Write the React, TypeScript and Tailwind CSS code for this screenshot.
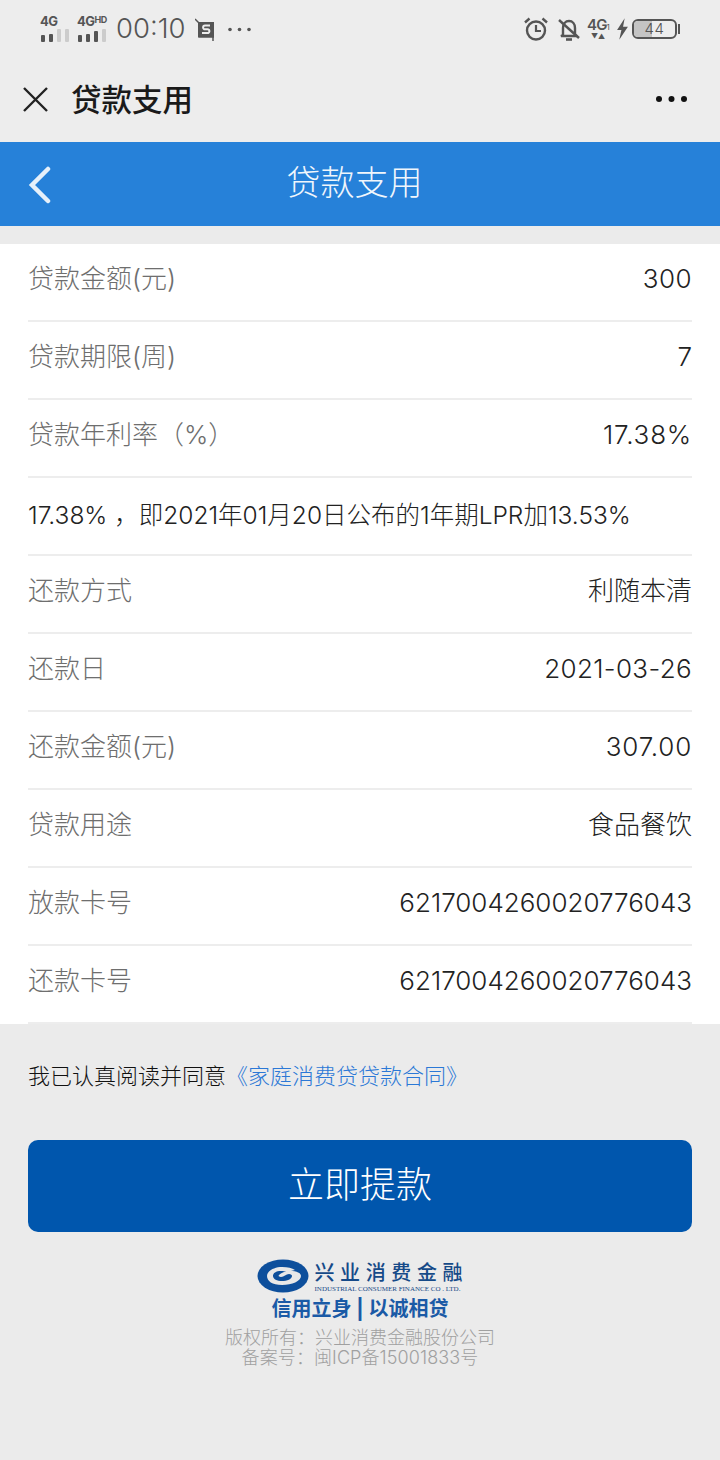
import React from "react";

const FONT = "font-['Inter','Noto_Sans_CJK_SC',sans-serif]";

const rows = [
  { label: "贷款金额(元)", value: "300", spacing: "tracking-[0.5px]" },
  { label: "贷款期限(周)", value: "7", spacing: "" },
  { label: "贷款年利率（%）", value: "17.38%", spacing: "tracking-[0.8px]" },
  { note: "17.38% ，即2021年01月20日公布的1年期LPR加13.53%" },
  { label: "还款方式", value: "利随本清", spacing: "" },
  { label: "还款日", value: "2021-03-26", spacing: "tracking-[0.35px]" },
  { label: "还款金额(元)", value: "307.00", spacing: "tracking-[0.8px]" },
  { label: "贷款用途", value: "食品餐饮", spacing: "" },
  { label: "放款卡号", value: "6217004260020776043", spacing: "" },
  { label: "还款卡号", value: "6217004260020776043", spacing: "" },
];

const SignalBars = ({ heights, level }: { heights: number[]; level: number }) => (
  <div className="mt-[1px] ml-[1px] flex h-[14px] items-end gap-[4px]">
    {heights.map((h, i) => (
      <span key={i} className={i < level ? "w-[4px] rounded-[1px] bg-[#555]" : "w-[4px] rounded-[1px] bg-[#ccc]"} style={{ height: h }} />
    ))}
  </div>
);

const StatusBar = () => (
  <div className="flex h-[58px] items-center justify-between pr-[40px] pl-[40px] text-[#555]">
    <div className="flex items-center">
      <div className="flex w-[37px] flex-col">
        <span className="h-[11px] text-[13px] leading-[11px] font-bold tracking-[-0.5px] text-[#555]">4G</span>
        <SignalBars heights={[7, 8, 13, 13]} level={2} />
      </div>
      <div className="flex w-[39px] flex-col">
        <span className="flex h-[11px] text-[13px] leading-[11px] font-bold tracking-[-0.5px] text-[#555]">
          4G<span className="text-[9px] leading-[8px]">HD</span>
        </span>
        <SignalBars heights={[7, 8, 11, 13]} level={3} />
      </div>
      <span className="text-[27.500px] leading-none font-light text-[#555]">00:10</span>
      <svg className="ml-[9px]" width="22" height="23" viewBox="0 0 22 23">
        <path d="M0 1l4 4M4 5v14h15M18 23v-4" stroke="#555" strokeWidth="1.500" fill="none" />
        <rect x="3" y="4" width="16" height="15" fill="#555" />
        <path d="M15 7.500h-5a1.800 1.800 0 0 0 0 3.800h2.500a1.800 1.800 0 0 1 0 3.800H7" stroke="#ededed" strokeWidth="2" fill="none" />
      </svg>
      <svg className="ml-[11px]" width="23" height="5" viewBox="0 0 23 5">
        <circle cx="2" cy="2.500" r="1.800" fill="#555" />
        <circle cx="11.500" cy="2.500" r="1.800" fill="#555" />
        <circle cx="21" cy="2.500" r="1.800" fill="#555" />
      </svg>
    </div>
    <div className="flex items-center">
      <svg width="24" height="24" viewBox="0 0 24 24" fill="none" stroke="#555">
        <circle cx="12" cy="13.500" r="9" strokeWidth="2.400" />
        <path d="M12 8v6h5" strokeWidth="2.200" />
        <path d="M1 5.500l4.500-4M23 5.500l-4.500-4" strokeWidth="2.400" />
      </svg>
      <svg className="ml-[9px]" width="24" height="24" viewBox="0 0 24 24" fill="none" stroke="#555">
        <path d="M6 18v-7c0-4 2.500-7 6-7s6 3 6 7v7l2 1H4z" strokeWidth="2.400" />
        <path d="M9 22.500h6" strokeWidth="2.600" />
        <path d="M2 3l20 18" strokeWidth="2.400" />
      </svg>
      <div className="ml-[5px] flex w-[24px] flex-col items-center">
        <span className="h-[15px] text-[15px] leading-[15px] font-semibold tracking-[-0.8px]">
          4G<span className="text-[8px] font-normal">1</span>
        </span>
        <span className="text-[7px] leading-[9px]">▼▲</span>
      </div>
      <svg className="ml-[6px]" width="13" height="22" viewBox="0 0 12 20">
        <path d="M8 0L1 11h4l-2 9 8-12H6.500z" fill="#555" />
      </svg>
      <div className="relative ml-[3px] h-[20px] w-[45px] overflow-hidden rounded-[6px] border-2 border-[#555]">
        <div className="h-full w-[18px] bg-[#c4c4c4]" />
        <span className="absolute inset-0 text-center text-[15px] leading-[16px] font-light tracking-[0.5px] text-[#555]">44</span>
      </div>
      <div className="ml-[1px] h-[10px] w-[2px] bg-[#555]" />
    </div>
  </div>
);

const NavBar = () => (
  <div className="flex h-[84px] items-center justify-between pr-[32px] pb-[2px] pl-[23px]">
    <div className="flex items-center">
      <svg width="25" height="25" viewBox="0 0 25 25" stroke="#222" strokeWidth="2.400" fill="none">
        <path d="M1 1l23 23M24 1L1 24" />
      </svg>
      <span className="mt-[2px] ml-[23px] text-[30.500px] leading-none font-medium text-[#1a1a1a]">贷款支用</span>
    </div>
    <svg width="32" height="6" viewBox="0 0 32 6" fill="#111">
      <circle cx="3" cy="3" r="3" />
      <circle cx="15.500" cy="3" r="3" />
      <circle cx="28" cy="3" r="3" />
    </svg>
  </div>
);

const BlueHeader = () => (
  <div className="relative flex h-[84px] items-center justify-center bg-[#2681d9] pb-[3px]">
    <svg className="absolute top-[24px] left-[28px]" width="24" height="38" viewBox="0 0 24 38" fill="none" stroke="#e6f0fa" strokeWidth="4.500" strokeLinecap="round">
      <path d="M20 3L4 19l16 16" />
    </svg>
    <span className="pr-[11px] text-[34px] leading-none font-light text-[#f0f6fc]">贷款支用</span>
  </div>
);

const Logo = () => (
  <div className="flex items-center">
    <svg width="52" height="34" viewBox="0 0 52 34">
      <ellipse cx="26" cy="17" rx="25.500" ry="16.500" fill="#0d4f9c" />
      <path d="M10 17c0-5 7-9 15-9 6 0 10 1 13 3l-8 2c-2-1-4-1-6-1-5 0-8 2-8 5s4 5 9 5 10-2 10-5c0-1-1-2-3-2-3 0-5 3-8 3-2 0-3-1-2-2 2-2 6-4 11-4 7 0 11 2 11 5 0 5-9 9-19 9S10 22 10 17z" fill="#e8e8e8" />
    </svg>
    <div className="ml-[6px] flex w-[149px] flex-col">
      <span className="h-[24px] font-['Noto_Sans_CJK_SC',sans-serif] text-[20px] leading-[24px] font-medium tracking-[5.600px] whitespace-nowrap text-[#164a88]">兴业消费金融</span>
      <span className="mt-[1px] h-[8px] font-['Liberation_Serif',serif] text-[7px] leading-[8px] whitespace-nowrap text-[#164a88]">INDUSTRIAL CONSUMER FINANCE CO . LTD.</span>
    </div>
  </div>
);

export default function App() {
  return (
    <div className={`${FONT} h-[1460px] w-[720px] overflow-hidden bg-[#ebebeb]`}>
      <div className="bg-[#ededed]">
        <StatusBar />
        <NavBar />
      </div>
      <BlueHeader />
      <div className="mt-[18px] bg-white px-[28px]">
        {rows.map((row, i) => (
          <div key={i} className="flex h-[78px] items-center justify-between border-b-2 border-[#ededed] pb-[6px] text-[26px] leading-none font-light">
            {row.note ? (
              <span className="pt-[5px] text-[24.500px] whitespace-nowrap text-[#222]">{row.note}</span>
            ) : (
              <>
                <span className="text-[#6e6e6e]">{row.label}</span>
                <span className={`${row.spacing} text-[#222]`}>{row.value}</span>
              </>
            )}
          </div>
        ))}
      </div>
      <div className="mt-[38px] px-[28px] text-[22px] leading-[28px] font-light whitespace-nowrap text-[#111]">
        我已认真阅读并同意
        <span className="text-[#2b78d6]">《家庭消费贷贷款合同》</span>
      </div>
      <div className="mx-[28px] mt-[50px] flex h-[92px] items-center justify-center rounded-[10px] bg-[#0056ad] pb-[2px] text-[36px] font-light text-white">
        立即提款
      </div>
      <div className="mt-[27px] flex flex-col items-center">
        <Logo />
        <span className="mt-[3px] text-[20px] leading-[26px] font-bold text-[#1a5aa6]">信用立身 | 以诚相贷</span>
        <span className="mt-[6px] text-[18px] leading-[20px] font-light text-[#a0a0a0]">版权所有：兴业消费金融股份公司</span>
        <span className="text-[18px] leading-[20px] font-light tracking-[0.1px] text-[#a0a0a0]">备案号：闽ICP备15001833号</span>
      </div>
    </div>
  );
}
